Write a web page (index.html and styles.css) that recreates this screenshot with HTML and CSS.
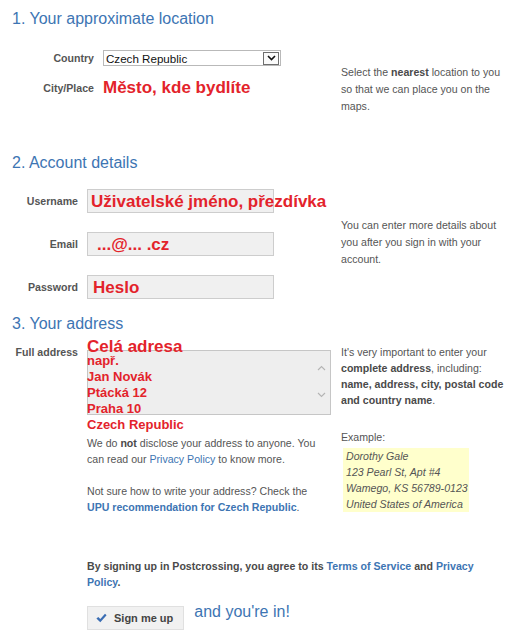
FILE: index.html
```html
<!DOCTYPE html>
<html lang="en">
<head>
  <meta charset="UTF-8">
  <title>Sign up</title>
  <link rel="stylesheet" href="styles.css">
</head>
<body>
  <div class="page">
    <section class="step step-location">
      <h2>1. Your approximate location</h2>
      <div class="step-body">
        <div class="fields">
          <div class="row">
            <span class="label">Country</span>
            <div class="select">
              <span>Czech Republic</span>
              <span class="select-arrow">
                <svg width="9" height="6" viewBox="0 0 9 6"><path d="M1 1 L4.5 4.5 L8 1" fill="none" stroke="#111" stroke-width="1.6"/></svg>
              </span>
            </div>
          </div>
          <div class="row row-city">
            <span class="label">City/Place</span>
            <span class="mark">Město, kde bydlíte</span>
          </div>
        </div>
        <p class="help">Select the <b>nearest</b> location to you so that we can place you on the maps.</p>
      </div>
    </section>

    <section class="step step-account">
      <h2>2. Account details</h2>
      <div class="step-body">
        <div class="fields">
          <div class="row">
            <span class="label">Username</span>
            <div class="input"><span class="mark">Uživatelské jméno, přezdívka</span></div>
          </div>
          <div class="row">
            <span class="label">Email</span>
            <div class="input input-email"><span class="mark">...@... .cz</span></div>
          </div>
          <div class="row">
            <span class="label">Password</span>
            <div class="input input-password"><span class="mark">Heslo</span></div>
          </div>
        </div>
        <p class="help">You can enter more details about you after you sign in with your account.</p>
      </div>
    </section>

    <section class="step step-address">
      <h2>3. Your address</h2>
      <div class="step-body">
        <div class="fields">
          <div class="row">
            <span class="label">Full address</span>
            <div class="address">
              <div class="textarea">
                <div class="scroll">
                  <svg width="9" height="6" viewBox="0 0 9 6"><path d="M1 5 L4.5 1.5 L8 5" fill="none" stroke="#b4b4b4" stroke-width="1.1"/></svg>
                  <svg width="9" height="6" viewBox="0 0 9 6"><path d="M1 1 L4.5 4.5 L8 1" fill="none" stroke="#b4b4b4" stroke-width="1.1"/></svg>
                </div>
              </div>
              <div class="note">
                <div class="note-title">Celá adresa</div>
                <div>např.</div>
                <div>Jan Novák</div>
                <div>Ptácká 12</div>
                <div>Praha 10</div>
                <div>Czech Republic</div>
              </div>
              <div class="address-info">
                <p>We do <b>not</b> disclose your address to anyone. You can read our <a href="#">Privacy Policy</a> to know more.</p>
                <p>Not sure how to write your address? Check the <a href="#"><b>UPU recommendation for Czech Republic</b></a>.</p>
              </div>
            </div>
          </div>
        </div>
        <div class="help help-address">
          <p>It's very important to enter your <b>complete address</b>, including: <b>name, address, city, postal code and country name</b>.</p>
          <p class="example-label">Example:</p>
          <div class="example">Dorothy Gale<br>123 Pearl St, Apt #4<br>Wamego, KS 56789-0123<br>United States of America</div>
        </div>
      </div>
    </section>

    <p class="agree">By signing up in Postcrossing, you agree to its <a href="#">Terms of Service</a> and <a href="#">Privacy Policy</a>.</p>
    <div class="finish">
      <button class="button" type="button">
        <svg width="11" height="10" viewBox="0 0 11 10"><path d="M0.4 5.6 L2.3 3.9 L4.3 5.9 L9 0.7 L10.6 2.3 L4.3 9.2 Z" fill="#3a6db3"/></svg>
        Sign me up
      </button>
      <span class="finish-text">and you're in!</span>
    </div>
  </div>
</body>
</html>
```

FILE: styles.css
```css
body {
  margin: 0;
  font-family: "Liberation Sans", Arial, sans-serif;
  font-size: 10.6px;
  color: #555;
  background: #fff;
}
.page {
  padding: 9px 0 0 12px;
}
h2 {
  margin: 0;
  font-size: 16px;
  line-height: 20px;
  font-weight: normal;
  color: #3d75b3;
}
a {
  color: #3d75b3;
  text-decoration: none;
}
b {
  color: #4a4a4a;
}
a b {
  color: inherit;
}
.step-body {
  display: flex;
  align-items: flex-start;
}
.fields {
  flex: none;
  width: 329px;
  display: flex;
  flex-direction: column;
}
.row {
  display: flex;
  align-items: center;
}
.label {
  flex: none;
  box-sizing: border-box;
  padding-right: 9px;
  text-align: right;
  font-weight: bold;
  color: #555;
  white-space: nowrap;
}
.step-location .label { width: 91px; }
.step-account .label,
.step-address .label { width: 75px; }

.mark {
  color: #e3232b;
  font-size: 17px;
  line-height: 20px;
  font-weight: bold;
  white-space: nowrap;
}
.help {
  margin: 0;
  width: 168px;
  line-height: 17px;
}

/* 1. location */
.step-location .step-body { margin-top: 21px; }
.select {
  box-sizing: border-box;
  width: 178px;
  height: 16px;
  padding-left: 2px;
  display: flex;
  align-items: center;
  justify-content: space-between;
  border: 1px solid #b9b9b9;
  background: #fff;
  font-size: 11.6px;
  color: #111;
}
.select-arrow {
  box-sizing: border-box;
  width: 16px;
  height: 13px;
  margin-right: 1px;
  display: flex;
  align-items: center;
  justify-content: center;
  border: 1px solid #6e6e6e;
  background: #fafafa;
}
.row-city { margin-top: 12px; }
.step-location .help { margin-top: 14px; }

/* 2. account */
.step-account { margin-top: 38px; }
.step-account .step-body { margin-top: 16px; }
.step-account .row + .row { margin-top: 19px; }
.input {
  box-sizing: border-box;
  width: 187px;
  height: 24px;
  padding: 2px 0 0 3px;
  display: flex;
  align-items: flex-start;
  border: 1px solid #cdcdcd;
  background: #f0f0f0;
}
.input-email { padding-left: 9px; }
.input-password { padding-left: 5px; }
.step-account .help { margin-top: 28px; }

/* 3. address */
.step-address { margin-top: 15px; }
.step-address .step-body { margin-top: 10px; }
.step-address .row { align-items: flex-start; }
.step-address .label { line-height: 16px; }
.address {
  position: relative;
  width: 244px;
}
.textarea {
  box-sizing: border-box;
  height: 65px;
  margin-top: 6px;
  display: flex;
  justify-content: flex-end;
  border: 1px solid #c6c6c6;
  background: #eeeeee;
}
.scroll {
  width: 17px;
  padding-top: 14px;
  display: flex;
  flex-direction: column;
  align-items: center;
  gap: 21px;
}
.note {
  position: absolute;
  top: -4px;
  left: 0;
  color: #e3232b;
  font-size: 13px;
  line-height: 16px;
  font-weight: bold;
  white-space: nowrap;
}
.note-title {
  font-size: 17px;
  line-height: 13px;
}
.address-info {
  max-width: 240px;
  margin-top: 20px;
  line-height: 16px;
}
.address-info p { margin: 0 0 16px; }
.address-info p:last-child { margin-bottom: 0; }
.help-address { line-height: 16px; }
.help-address p { margin: 0; }
.example-label { margin-top: 21px !important; }
.example {
  width: fit-content;
  margin: 3px 0 0 2px;
  padding: 0 1px 0 3px;
  background: #ffffcc;
  font-style: italic;
}

/* sign up */
.agree {
  width: 400px;
  margin: 43px 0 0 75px;
  line-height: 16px;
  font-weight: bold;
  color: #4a4a4a;
}
.finish {
  display: flex;
  align-items: flex-start;
  margin: 16px 0 0 75px;
}
.button {
  box-sizing: border-box;
  height: 24px;
  padding: 0 10px 0 8px;
  display: flex;
  align-items: center;
  gap: 7px;
  border: 1px solid #e0e0e0;
  border-radius: 0;
  background: #f1f1f1;
  font-family: inherit;
  font-size: 11px;
  font-weight: bold;
  color: #444;
}
.finish-text {
  margin: -2px 0 0 10px;
  font-size: 16px;
  line-height: 16px;
  color: #3d75b3;
}
```
